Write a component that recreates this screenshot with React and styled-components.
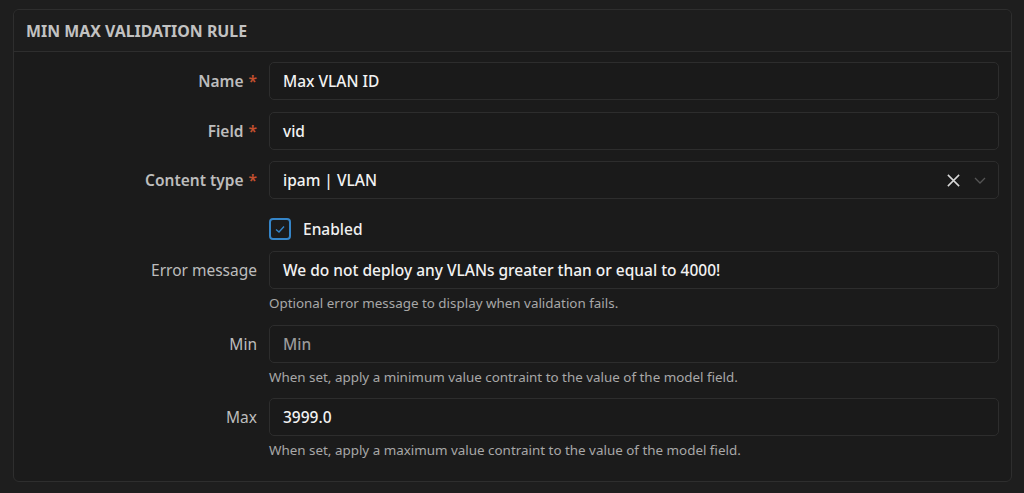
import styled, { createGlobalStyle } from "styled-components"

const Global = createGlobalStyle`
  body {
    margin: 0;
    background: #1e1e1e;
    font-family: "Noto Sans", "Open Sans", sans-serif;
    color: #e6e6e6;
  }
`

const Page = styled.div`
  padding: 9px 12px 10px 13px;
`

const Card = styled.div`
  background: #1b1b1b;
  border: 1px solid #2e2e2e;
  border-radius: 6px;
`

const CardHeader = styled.div`
  height: 41px;
  display: flex;
  align-items: center;
  padding: 0 12px;
  border-bottom: 1px solid #2e2e2e;
  background: #1d1d1d;
  border-radius: 6px 6px 0 0;
`

const CardTitle = styled.h2`
  margin: 0;
  font-size: 15.9px;
  font-weight: 700;
  color: #c2c2c2;
`

const CardBody = styled.div`
  padding: 10px 12px 21px 0;
  display: flex;
  flex-direction: column;
  gap: 11.5px;
`

const Row = styled.div`
  display: grid;
  grid-template-columns: 243px 1fr;
  column-gap: 12px;
`

const Label = styled.label`
  justify-self: end;
  height: 38px;
  display: flex;
  align-items: center;
  font-size: 15.5px;
  font-weight: ${p => (p.required ? 600 : 400)};
  color: #bdbdbd;
`

const Star = styled.span`
  color: #c4502f;
  margin-left: 5px;
`

const Field = styled.div`
  display: flex;
  flex-direction: column;
`

const Input = styled.div`
  height: 36px;
  border: 1px solid #2d2d2d;
  border-radius: 5px;
  background: #1a1a1a;
  display: flex;
  align-items: center;
  padding: 0 13px;
  font-size: 15.5px;
  font-weight: 500;
  color: ${p => (p.placeholder ? "#9a9a9a" : "#f2f2f2")};
`

const Value = styled.span`
  flex: 1;
`

const SelectIcons = styled.div`
  display: flex;
  align-items: center;
  gap: 12px;
  margin-right: -2px;
`

const Help = styled.div`
  font-size: 13.4px;
  line-height: 18px;
  color: #a8a8a8;
  margin-top: 5px;
  margin-bottom: 1px;
`

const CheckRow = styled.div`
  display: flex;
  align-items: flex-start;
  gap: 12px;
  height: 29px;
  padding-top: 7.5px;
  box-sizing: border-box;
`

const Box = styled.span`
  width: 22px;
  height: 22px;
  box-sizing: border-box;
  border: 2px solid #3585c8;
  border-radius: 4px;
  display: flex;
  align-items: center;
  justify-content: center;
  flex-shrink: 0;
`

const CheckText = styled.span`
  font-size: 15.5px;
  line-height: 22px;
  font-weight: 500;
  color: #f0f0f0;
`

const FormRow = ({ label, required, value, placeholder, help, children }) => (
  <Row>
    <Label required={required}>
      {label}
      {required && <Star>*</Star>}
    </Label>
    <Field>
      <Input placeholder={placeholder}>
        <Value>{value}</Value>
        {children}
      </Input>
      {help && <Help>{help}</Help>}
    </Field>
  </Row>
)

const App = () => {
  return (
    <Page>
      <Global />
      <Card>
        <CardHeader>
          <CardTitle>MIN MAX VALIDATION RULE</CardTitle>
        </CardHeader>
        <CardBody>
          <FormRow label="Name" required value="Max VLAN ID" />
          <FormRow label="Field" required value="vid" />
          <FormRow label="Content type" required value="ipam | VLAN">
            <SelectIcons>
              <svg width="15" height="15" viewBox="0 0 16 16">
                <path d="M2 2L14 14M14 2L2 14" stroke="#d8d8d8" strokeWidth="1.6" fill="none" />
              </svg>
              <svg width="14" height="14" viewBox="0 0 14 14">
                <path d="M2 5L7 10L12 5" stroke="#555" strokeWidth="1.3" fill="none" />
              </svg>
            </SelectIcons>
          </FormRow>
          <Row>
            <div />
            <CheckRow>
              <Box>
                <svg width="12" height="12" viewBox="0 0 12 12">
                  <path d="M2 6.5L5 9L10 3.5" stroke="#3585c8" strokeWidth="1.4" fill="none" />
                </svg>
              </Box>
              <CheckText>Enabled</CheckText>
            </CheckRow>
          </Row>
          <FormRow
            label="Error message"
            value="We do not deploy any VLANs greater than or equal to 4000!"
            help="Optional error message to display when validation fails."
          />
          <FormRow
            label="Min"
            placeholder
            value="Min"
            help="When set, apply a minimum value contraint to the value of the model field."
          />
          <FormRow
            label="Max"
            value="3999.0"
            help="When set, apply a maximum value contraint to the value of the model field."
          />
        </CardBody>
      </Card>
    </Page>
  )
}

export default App
